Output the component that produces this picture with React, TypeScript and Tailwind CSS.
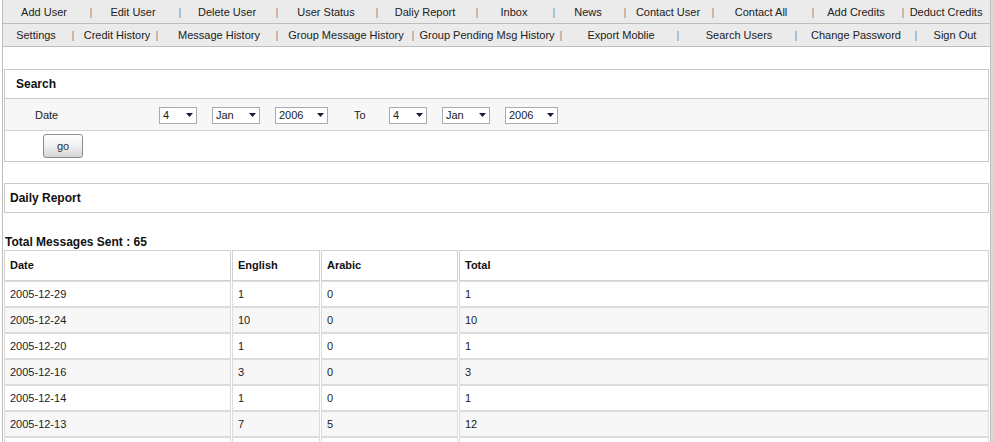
import * as React from 'react';

const navTop: [string, string][] = [
  ['Add User', 'ml-[41px]'],
  ['|', 'ml-[47px]'],
  ['Edit User', 'ml-[42px]'],
  ['|', 'ml-[47px]'],
  ['Delete User', 'ml-[47px]'],
  ['|', 'ml-[50px]'],
  ['User Status', 'ml-[49px]'],
  ['|', 'ml-[51px]'],
  ['Daliy Report', 'ml-[48px]'],
  ['|', 'ml-[52px]'],
  ['Inbox', 'ml-[37px]'],
  ['|', 'ml-[40px]'],
  ['News', 'ml-[34px]'],
  ['|', 'ml-[37px]'],
  ['Contact User', 'ml-[43px]'],
  ['|', 'ml-[45px]'],
  ['Contact All', 'ml-[48px]'],
  ['|', 'ml-[52px]'],
  ['Add Credits', 'ml-[43px]'],
  ['|', 'ml-[47px]'],
  ['Deduct Credits', 'ml-[43px]'],
];

const navBottom: [string, string][] = [
  ['Settings', 'ml-[33px]'],
  ['|', 'ml-[37px]'],
  ['Credit History', 'ml-[44px]'],
  ['|', 'ml-[40px]'],
  ['Message History', 'ml-[62px]'],
  ['|', 'ml-[58px]'],
  ['Group Message History', 'ml-[69px]'],
  ['|', 'ml-[67px]'],
  ['Group Pending Msg History', 'ml-[74px]'],
  ['|', 'ml-[74px]'],
  ['Export Moblie', 'ml-[60px]'],
  ['|', 'ml-[57px]'],
  ['Search Users', 'ml-[61px]'],
  ['|', 'ml-[57px]'],
  ['Change Password', 'ml-[60px]'],
  ['|', 'ml-[60px]'],
  ['Sign Out', 'ml-[39px]'],
];

const rows = [
  ['2005-12-29', '1', '0', '1'],
  ['2005-12-24', '10', '0', '10'],
  ['2005-12-20', '1', '0', '1'],
  ['2005-12-16', '3', '0', '3'],
  ['2005-12-14', '1', '0', '1'],
  ['2005-12-13', '7', '5', '12'],
];

function NavRow({ items, last }: { items: [string, string][]; last?: boolean }) {
  return (
    <div
      className={`flex items-center bg-[#ebebeb] border-b border-[#bdbdbd] ${last ? 'h-[23px]' : 'h-[24px] pt-[1px]'}`}
    >
      {items.map(([label, ml], i) => (
        <span
          key={i}
          className={`${ml} w-0 shrink-0 flex justify-center whitespace-nowrap ${
            label === '|' ? 'text-[#8a8a8a]' : 'text-[#222]'
          }`}
        >
          {label}
        </span>
      ))}
    </div>
  );
}

function Select({ value, width }: { value: string; width: string }) {
  return (
    <div
      className={`${width} h-[17px] shrink-0 flex items-center justify-between bg-white border border-[#a5acb2] pl-[3px] pr-[3px]`}
    >
      <span className="text-[#222]">{value}</span>
      <svg width="7" height="4" viewBox="0 0 7 4">
        <polygon points="0,0 7,0 3.5,4" fill="#1b1b3a" />
      </svg>
    </div>
  );
}

function App(): JSX.Element {
  return (
    <div className="w-[993px] h-[442px] overflow-hidden bg-white flex font-['Liberation_Sans',Arial,sans-serif] text-[11px] text-[#222]">
      <div className="w-[2px] shrink-0" />
      <div className="w-[989px] shrink-0 border-l border-r border-[#bdbdbd]">
        <NavRow items={navTop} />
        <NavRow items={navBottom} last />

        {/* search box */}
        <div className="mt-[22px] mx-[1px] border border-[#c9c9c9]">
          <div className="h-[29px] flex items-center pl-[11px] border-b border-[#c9c9c9] font-bold text-[12px] text-[#111]">
            Search
          </div>
          <div className="h-[32px] flex items-center pt-[1px] bg-[#f7f7f7] border-b border-[#d4d4d4]">
            <span className="w-[154px] shrink-0 pl-[30px]">Date</span>
            <Select value="4" width="w-[38px]" />
            <div className="ml-[15px]">
              <Select value="Jan" width="w-[48px]" />
            </div>
            <div className="ml-[15px]">
              <Select value="2006" width="w-[53px]" />
            </div>
            <span className="ml-[26px] w-[35px] shrink-0">To</span>
            <Select value="4" width="w-[38px]" />
            <div className="ml-[15px]">
              <Select value="Jan" width="w-[48px]" />
            </div>
            <div className="ml-[15px]">
              <Select value="2006" width="w-[53px]" />
            </div>
          </div>
          <div className="h-[30px] pl-[38px] pt-[3px]">
            <button className="w-[40px] h-[24px] rounded-[3px] border border-[#8c8c8c] bg-gradient-to-b from-white via-[#f0f0f0] to-[#d6d6d6] text-[#333] text-[11px]">
              go
            </button>
          </div>
        </div>

        {/* daily report box */}
        <div className="mt-[21px] mx-[1px] h-[30px] border border-[#c9c9c9] flex items-center pl-[5px] font-bold text-[12px] text-[#111]">
          Daily Report
        </div>

        <p className="mt-[22px] ml-[2px] h-[14px] leading-[14px] font-bold text-[12px] text-[#111]">
          Total Messages Sent : 65
        </p>

        <table className="mt-[1px] w-[987px] table-fixed border-separate border-spacing-x-px border-spacing-y-0">
          <thead>
            <tr className="h-[31px]">
              <th className="w-[227px] border border-[#d2d2d2] text-left pl-[5px] font-bold text-[#111]">Date</th>
              <th className="w-[88px] border border-[#d2d2d2] text-left pl-[5px] font-bold text-[#111]">English</th>
              <th className="w-[137px] border border-[#d2d2d2] text-left pl-[5px] font-bold text-[#111]">Arabic</th>
              <th className="border border-[#d2d2d2] text-left pl-[5px] font-bold text-[#111]">Total</th>
            </tr>
          </thead>
          <tbody>
            {rows.map((r, i) => (
              <tr key={r[0]} className={`h-[26px] ${i % 2 === 1 ? 'bg-[#f7f7f7]' : 'bg-white'}`}>
                {r.map((c, j) => (
                  <td key={j} className="border border-[#dcdcdc] pl-[5px] pt-[1px] text-[#222]">
                    {c}
                  </td>
                ))}
              </tr>
            ))}
            <tr className="h-[26px] bg-white">
              <td className="border border-[#dcdcdc]" />
              <td className="border border-[#dcdcdc]" />
              <td className="border border-[#dcdcdc]" />
              <td className="border border-[#dcdcdc]" />
            </tr>
          </tbody>
        </table>
      </div>
      <div className="w-[2px] shrink-0 bg-[#dadada]" />
    </div>
  );
}

export default App;
